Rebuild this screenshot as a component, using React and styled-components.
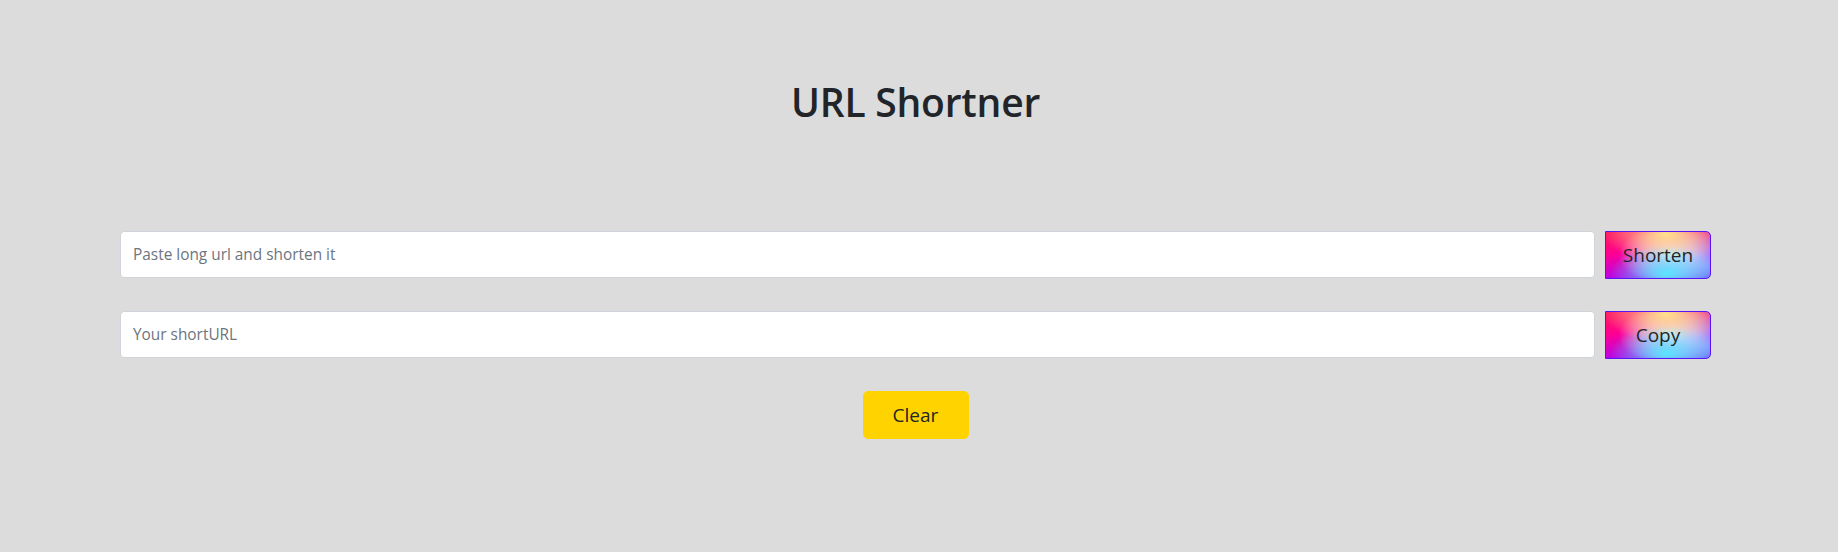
import React from "react";
import styled, { createGlobalStyle } from "styled-components";

const Global = createGlobalStyle`
  html, body { margin: 0; padding: 0; background: #dcdcdc; }
  body { font-family: "Open Sans", "Noto Sans", sans-serif; color: #212529; }
  * { box-sizing: border-box; }
`;

const Page = styled.main`
  min-height: 552px;
  padding: 78px 127px 0 120px;
  display: flex;
  flex-direction: column;
  align-items: stretch;
`;

const Title = styled.h1`
  margin: 0 0 105px;
  text-align: center;
  font-size: 39px;
  font-weight: 600;
  line-height: 48px;
  letter-spacing: -0.2px;
  color: #212529;
`;

const Form = styled.div`
  display: flex;
  flex-direction: column;
  gap: 32px;
  align-items: stretch;
`;

const Row = styled.div`
  display: flex;
  gap: 10px;
`;

const Input = styled.input`
  flex: 1;
  height: 47px;
  border: 1px solid #ced4da;
  border-radius: 4px;
  background: #fff;
  padding: 0 12px;
  font-family: inherit;
  font-size: 15.4px;
  color: #495057;
  &::placeholder { color: #6c757d; }
  &:focus { outline: none; }
`;

const GradientButton = styled.button`
  width: 106px;
  height: 48px;
  border: 1px solid #5b12f5;
  border-radius: 0 5px 5px 0;
  font-family: inherit;
  font-size: 19px;
  color: #212529;
  cursor: pointer;
  background:
    radial-gradient(ellipse 55% 60% at 58% 90%, rgba(90, 230, 255, 1) 0%, rgba(90, 230, 255, 0) 100%),
    radial-gradient(ellipse 60% 60% at 58% 5%, rgba(255, 225, 140, 1) 0%, rgba(255, 225, 140, 0) 100%),
    radial-gradient(ellipse 50% 65% at 62% 50%, rgba(235, 245, 250, 1) 0%, rgba(235, 245, 250, 0.6) 50%, rgba(235, 245, 250, 0) 100%),
    radial-gradient(ellipse 45% 90% at 100% 80%, rgba(120, 120, 255, 1) 0%, rgba(120, 120, 255, 0) 100%),
    linear-gradient(170deg, #ff1a5e 0%, #ff0090 35%, #c000e0 70%, #7a00ff 100%);
`;

const ClearButton = styled.button`
  align-self: center;
  width: 106px;
  height: 48px;
  border: 1px solid #ffd300;
  border-radius: 5px;
  background: #ffd300;
  font-family: inherit;
  font-size: 19px;
  color: #212529;
  cursor: pointer;
`;

export default function App() {
  return (
    <>
      <Global />
      <Page>
        <Title>URL Shortner</Title>
        <Form>
          <Row>
            <Input placeholder="Paste long url and shorten it" />
            <GradientButton>Shorten</GradientButton>
          </Row>
          <Row>
            <Input placeholder="Your shortURL" readOnly />
            <GradientButton>Copy</GradientButton>
          </Row>
          <ClearButton>Clear</ClearButton>
        </Form>
      </Page>
    </>
  );
}
